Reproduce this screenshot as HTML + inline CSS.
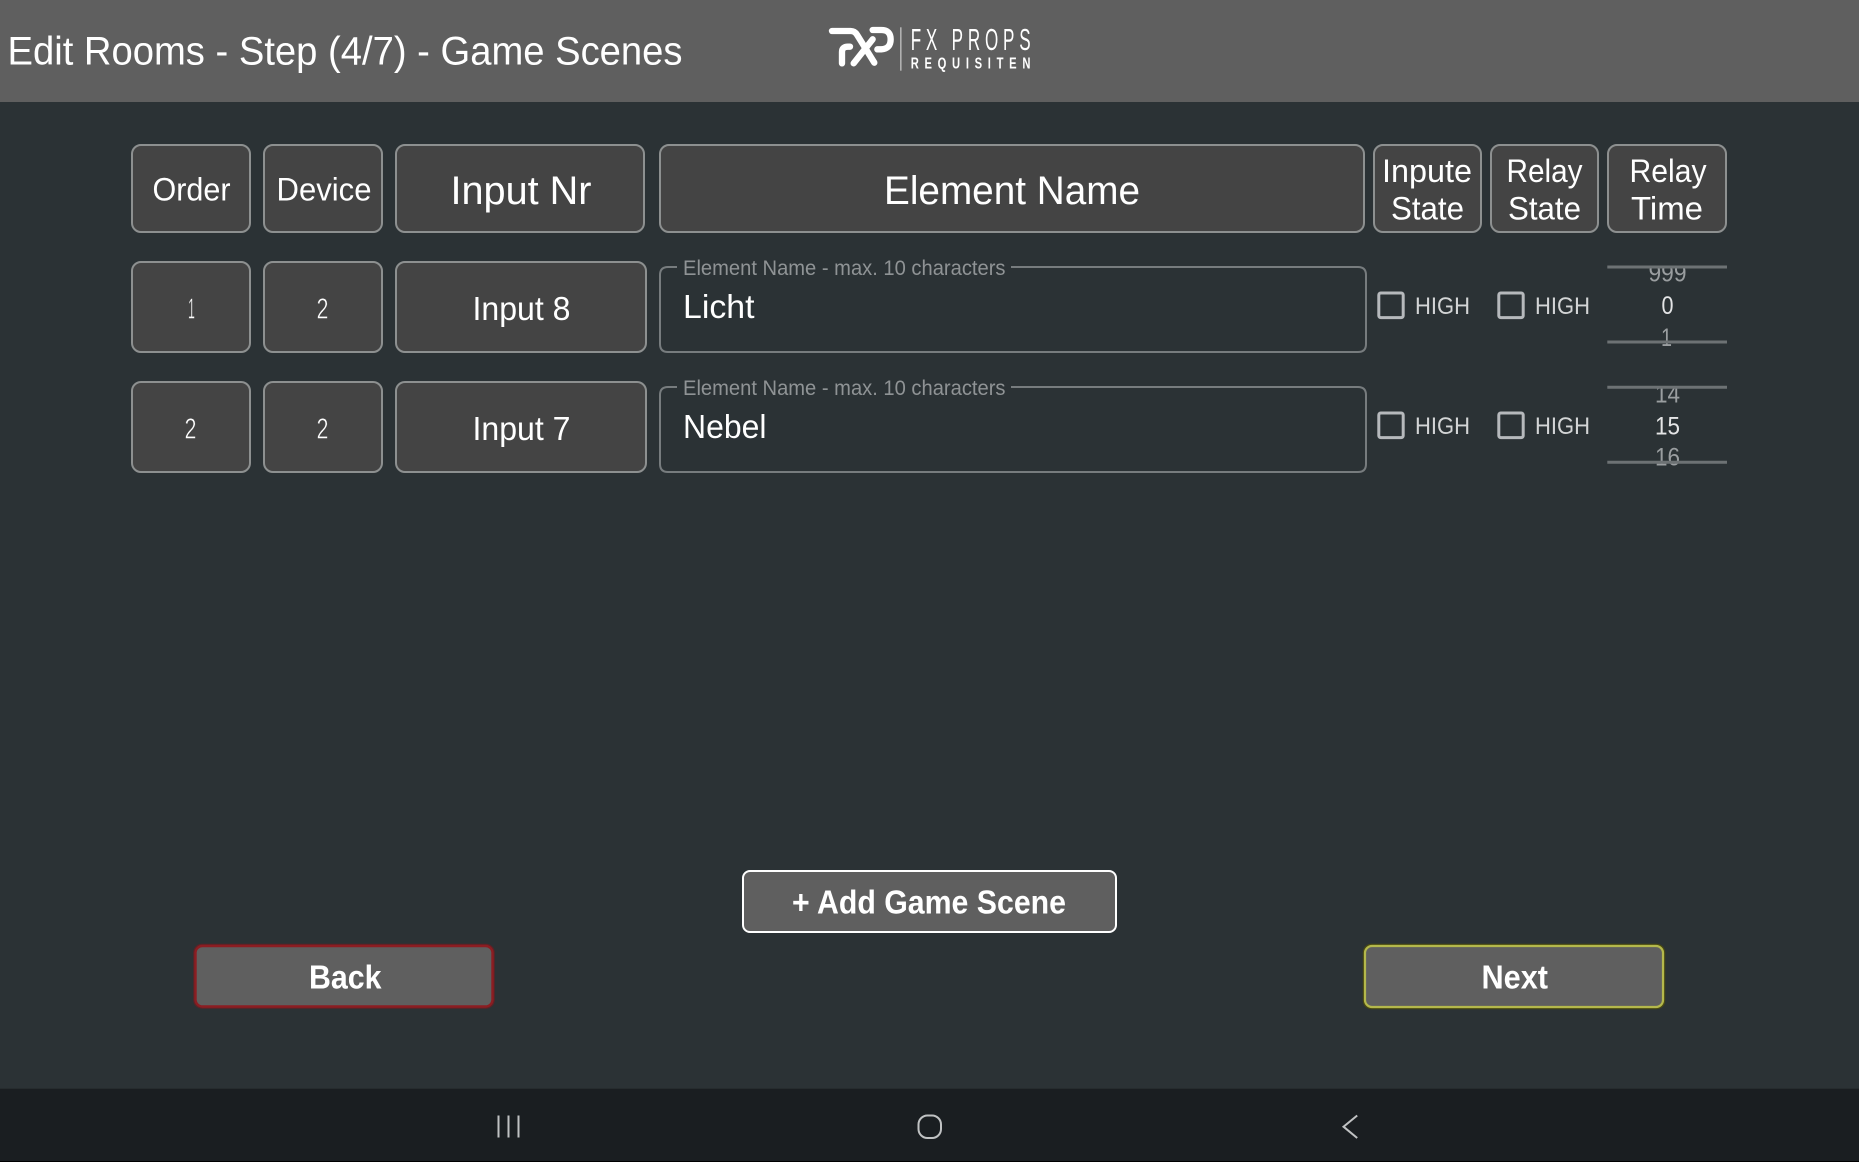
<!DOCTYPE html>
<html lang="en">
<head>
<meta charset="utf-8">
<title>Edit Rooms - Step (4/7) - Game Scenes</title>
<style>
html,body{margin:0;padding:0;background:#2b3235;width:1859px;height:1162px;overflow:hidden}
svg{display:block}
text{font-family:"Liberation Sans",sans-serif;fill:#fff}
.b{fill:#444444;stroke:#8d9090;stroke-width:2}
.f{fill:#2b3235;stroke:#777c7e;stroke-width:2}
.c{fill:none;stroke:#b6b9bc;stroke-width:3}
.h{fill:#d3d5d6;font-size:24.5px}
.l{fill:#8f9395;font-size:21px}
.d{fill:#9a9ea0;font-size:25px}
.s{stroke:#444444;stroke-width:.5;font-size:29px}
.ln{stroke:#6d7274;stroke-width:3}
</style>
</head>
<body>
<svg xmlns="http://www.w3.org/2000/svg" width="1859" height="1162" viewBox="0 0 1859 1162">
<defs>
<clipPath id="c1"><rect x="1600" y="268" width="130" height="30"/></clipPath>
<clipPath id="c2"><rect x="1600" y="388" width="130" height="30"/></clipPath>
</defs>
<rect width="1859" height="1162" fill="#2b3235"/>
<rect width="1859" height="102" fill="#5f5f5f"/>
<text x="7.5" y="64.5" font-size="40" textLength="675" lengthAdjust="spacingAndGlyphs">Edit Rooms - Step (4/7) - Game Scenes</text>

<!-- logo -->
<g transform="translate(820,20) scale(.3333)" fill="none" stroke="#fff" stroke-width="19" stroke-linecap="round" stroke-linejoin="round">
<path d="M36 33H92Q104 33 111 44L163 128"/>
<path d="M66 130V96Q66 80 84 80H90"/>
<path d="M101 130L158 58"/>
<path d="M158 30H184Q212 30 212 58Q212 86 184 88H172"/>
</g>
<rect x="900" y="27.3" width="1.6" height="43.4" fill="#b0b0b0"/>
<text transform="translate(910.7,50) scale(.55,1)" font-size="31" textLength="218" lengthAdjust="spacing">FX PROPS</text>
<text transform="translate(910.7,68.3) scale(.7,1)" font-size="16" font-weight="bold" textLength="171" lengthAdjust="spacing">REQUISITEN</text>

<!-- header row -->
<rect class="b" x="132" y="145" width="118" height="87" rx="9"/>
<rect class="b" x="264" y="145" width="118" height="87" rx="9"/>
<rect class="b" x="396" y="145" width="248" height="87" rx="9"/>
<rect class="b" x="660" y="145" width="704" height="87" rx="9"/>
<rect class="b" x="1374" y="145" width="107" height="87" rx="9"/>
<rect class="b" x="1491" y="145" width="107" height="87" rx="9"/>
<rect class="b" x="1608" y="145" width="118" height="87" rx="9"/>
<text x="152.5" y="200.5" font-size="32.5" textLength="78" lengthAdjust="spacingAndGlyphs">Order</text>
<text x="276.5" y="200.5" font-size="32.5" textLength="95" lengthAdjust="spacingAndGlyphs">Device</text>
<text x="450.5" y="204" font-size="40" textLength="141" lengthAdjust="spacingAndGlyphs">Input Nr</text>
<text x="884" y="204" font-size="40" textLength="256" lengthAdjust="spacingAndGlyphs">Element Name</text>
<text x="1382" y="182" font-size="32.5" textLength="90" lengthAdjust="spacingAndGlyphs">Inpute</text>
<text x="1391" y="219.6" font-size="32.5" textLength="73" lengthAdjust="spacingAndGlyphs">State</text>
<text x="1506.5" y="182" font-size="32.5" textLength="76" lengthAdjust="spacingAndGlyphs">Relay</text>
<text x="1508" y="219.6" font-size="32.5" textLength="73" lengthAdjust="spacingAndGlyphs">State</text>
<text x="1629.5" y="182" font-size="32.5" textLength="77" lengthAdjust="spacingAndGlyphs">Relay</text>
<text x="1631" y="219.6" font-size="32.5" textLength="72" lengthAdjust="spacingAndGlyphs">Time</text>

<!-- row 1 -->
<rect class="b" x="132" y="262" width="118" height="90" rx="9"/>
<rect class="b" x="264" y="262" width="118" height="90" rx="9"/>
<rect class="b" x="396" y="262" width="250" height="90" rx="9"/>
<text class="s" x="188" y="318.3" textLength="7" lengthAdjust="spacingAndGlyphs">1</text>
<text class="s" x="316.5" y="318.3" textLength="12" lengthAdjust="spacingAndGlyphs">2</text>
<text x="472.5" y="320" font-size="33.5" textLength="98" lengthAdjust="spacingAndGlyphs">Input 8</text>
<path class="f" d="M677 267H668Q660 267 660 275V344Q660 352 668 352H1358Q1366 352 1366 344V275Q1366 267 1358 267H1011"/>
<text class="l" x="683" y="275" textLength="322.5" lengthAdjust="spacingAndGlyphs">Element Name - max. 10 characters</text>
<text x="683" y="318" font-size="33.5" textLength="71.5" lengthAdjust="spacingAndGlyphs">Licht</text>
<rect class="c" x="1378.8" y="293" width="24.4" height="24.6" rx="2"/>
<text class="h" x="1415" y="314" textLength="55" lengthAdjust="spacingAndGlyphs">HIGH</text>
<rect class="c" x="1498.8" y="293" width="24.4" height="24.6" rx="2"/>
<text class="h" x="1535" y="314" textLength="55" lengthAdjust="spacingAndGlyphs">HIGH</text>
<text class="d" x="1648.5" y="281.7" textLength="38" lengthAdjust="spacingAndGlyphs" clip-path="url(#c1)">999</text>
<text x="1661.5" y="314" font-size="25" style="fill:#e4e5e6" textLength="12" lengthAdjust="spacingAndGlyphs">0</text>
<text class="d" x="1661" y="346" textLength="11" lengthAdjust="spacingAndGlyphs">1</text>
<line class="ln" x1="1607.3" x2="1727" y1="267" y2="267"/>
<line class="ln" x1="1607.3" x2="1727" y1="342" y2="342"/>

<!-- row 2 -->
<rect class="b" x="132" y="382" width="118" height="90" rx="9"/>
<rect class="b" x="264" y="382" width="118" height="90" rx="9"/>
<rect class="b" x="396" y="382" width="250" height="90" rx="9"/>
<text class="s" x="184.5" y="438.3" textLength="12" lengthAdjust="spacingAndGlyphs">2</text>
<text class="s" x="316.5" y="438.3" textLength="12" lengthAdjust="spacingAndGlyphs">2</text>
<text x="472.5" y="440" font-size="33.5" textLength="98" lengthAdjust="spacingAndGlyphs">Input 7</text>
<path class="f" d="M677 387H668Q660 387 660 395V464Q660 472 668 472H1358Q1366 472 1366 464V395Q1366 387 1358 387H1011"/>
<text class="l" x="683" y="395" textLength="322.5" lengthAdjust="spacingAndGlyphs">Element Name - max. 10 characters</text>
<text x="683" y="438" font-size="33.5" textLength="83.5" lengthAdjust="spacingAndGlyphs">Nebel</text>
<rect class="c" x="1378.8" y="413" width="24.4" height="24.6" rx="2"/>
<text class="h" x="1415" y="434" textLength="55" lengthAdjust="spacingAndGlyphs">HIGH</text>
<rect class="c" x="1498.8" y="413" width="24.4" height="24.6" rx="2"/>
<text class="h" x="1535" y="434" textLength="55" lengthAdjust="spacingAndGlyphs">HIGH</text>
<text class="d" x="1655" y="402.3" textLength="25" lengthAdjust="spacingAndGlyphs" clip-path="url(#c2)">14</text>
<text x="1655" y="434.3" font-size="25" style="fill:#e4e5e6" textLength="25" lengthAdjust="spacingAndGlyphs">15</text>
<text class="d" x="1655" y="465.7" textLength="25" lengthAdjust="spacingAndGlyphs">16</text>
<line class="ln" x1="1607.3" x2="1727" y1="387.3" y2="387.3"/>
<line class="ln" x1="1607.3" x2="1727" y1="462.3" y2="462.3"/>

<!-- buttons -->
<rect x="743" y="871" width="373" height="61" rx="7" fill="#5f5f5f" stroke="#fff" stroke-width="2"/>
<text x="792" y="913.7" font-size="33" font-weight="bold" textLength="274" lengthAdjust="spacingAndGlyphs">+ Add Game Scene</text>
<rect x="195" y="945.5" width="298" height="61.5" rx="7" fill="none" stroke="#5c2226" stroke-width="3.5"/>
<rect x="195.5" y="946" width="297" height="60.5" rx="7" fill="#5f5f5f" stroke="#8c1d22" stroke-width="2.4"/>
<text x="309" y="988.7" font-size="33" font-weight="bold" textLength="72.5" lengthAdjust="spacingAndGlyphs">Back</text>
<rect x="1364.5" y="945.5" width="299" height="62" rx="7" fill="none" stroke="#4a4a12" stroke-width="3.5"/>
<rect x="1365" y="946" width="298" height="61" rx="7" fill="#5f5f5f" stroke="#b4b84c" stroke-width="2.2"/>
<text x="1481.5" y="988.7" font-size="33" font-weight="bold" textLength="66.5" lengthAdjust="spacingAndGlyphs">Next</text>

<!-- nav bar -->
<rect y="1088.7" width="1859" height="73.3" fill="#1a1e21"/>
<rect y="1161" width="1859" height="1" fill="#000"/>
<g fill="none" stroke="#c0c2c3" stroke-width="2">
<path d="M498.5 1115.5V1137.5M508.5 1115.5V1137.5M518.5 1115.5V1137.5"/>
<rect x="918.5" y="1115.5" width="22.5" height="22.5" rx="9"/>
<path d="M1357.2 1115.5L1343.5 1126.7L1357.2 1138" stroke-width="2"/>
</g>
</svg>
</body>
</html>
